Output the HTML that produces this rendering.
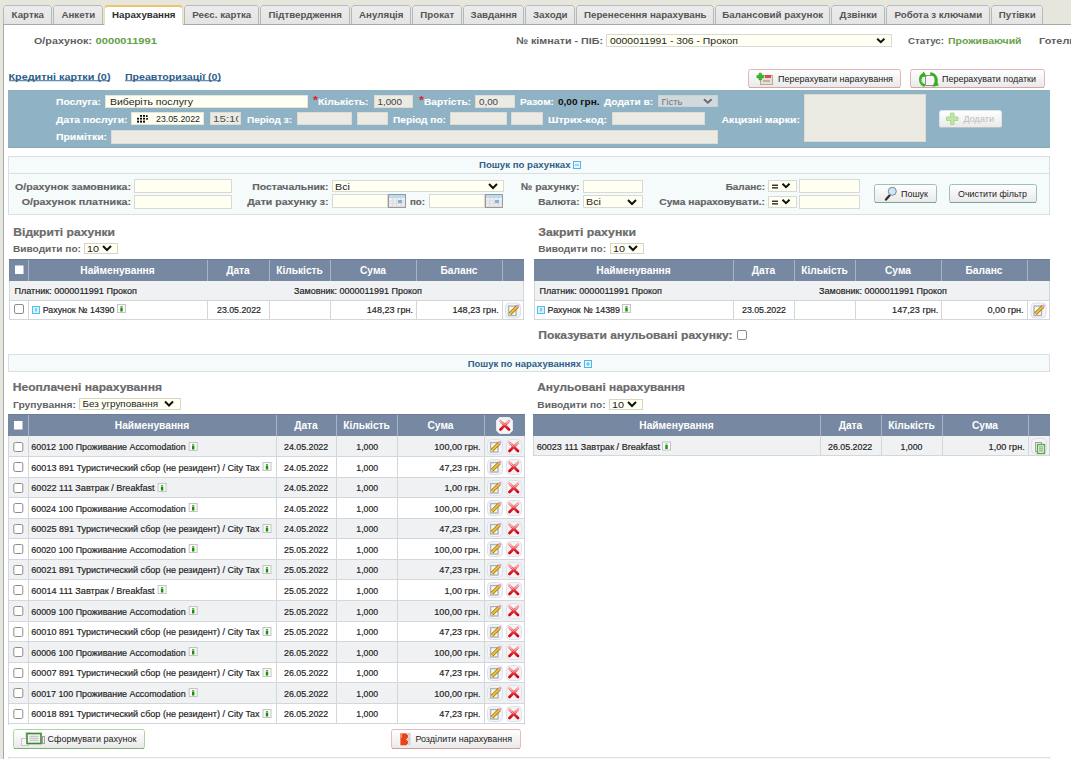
<!DOCTYPE html>
<html><head><meta charset="utf-8"><title>Нарахування</title>
<style>
html,body{margin:0;padding:0;background:#e6e6dc;overflow:hidden;width:1071px;height:759px}
svg{display:block;font-family:"Liberation Sans",sans-serif}
</style></head><body>
<svg width="1071" height="759" viewBox="0 0 1071 759">
<defs>
<linearGradient id="btn" x1="0" y1="0" x2="0" y2="1"><stop offset="0" stop-color="#ffffff"/><stop offset="1" stop-color="#e9e9e9"/></linearGradient>
<linearGradient id="tabg" x1="0" y1="0" x2="0" y2="1"><stop offset="0" stop-color="#ececec"/><stop offset="1" stop-color="#e4e4e4"/></linearGradient>
<linearGradient id="xg" x1="0" y1="0" x2="0" y2="1"><stop offset="0" stop-color="#f3a3a8"/><stop offset="0.45" stop-color="#e9434c"/><stop offset="1" stop-color="#d8000c"/></linearGradient>
</defs>
<rect x="0" y="0" width="1071" height="759" fill="#e6e6dc" />
<rect x="3" y="24" width="1068" height="735" fill="#ffffff" />
<rect x="3" y="24" width="1" height="735" fill="#a3aaab" />
<rect x="3" y="24" width="1068" height="1" fill="#a3aaab" />
<path d="M3.5,24 V7.5 L5.5,5.5 H49.5 L51.5,7.5 V24" fill="url(#tabg)" stroke="#b3baba" stroke-width="1"/>
<text x="11.64" y="18.30" font-size="9.4" fill="#555555" font-weight="bold" textLength="32.32" lengthAdjust="spacingAndGlyphs">Картка</text>
<path d="M53.5,24 V7.5 L55.5,5.5 H100.5 L102.5,7.5 V24" fill="url(#tabg)" stroke="#b3baba" stroke-width="1"/>
<text x="61.40" y="18.30" font-size="9.4" fill="#555555" font-weight="bold" textLength="33.80" lengthAdjust="spacingAndGlyphs">Анкети</text>
<path d="M104.5,25 V8 Q104.5,5.5 107,5.5 H180 Q182.5,5.5 182.5,8 V25" fill="#ffffff" stroke="#eadfb8" stroke-width="1"/>
<path d="M105.5,7.5 Q106,6 108,6 H179 Q181,6 181.5,7.5" fill="none" stroke="#ecc36e" stroke-width="2"/>
<rect x="105" y="24" width="78" height="2" fill="#ffffff" />
<text x="112.09" y="18.30" font-size="9.4" fill="#2e2e2e" font-weight="bold" textLength="63.42" lengthAdjust="spacingAndGlyphs">Нарахування</text>
<path d="M184.5,24 V7.5 L186.5,5.5 H256.5 L258.5,7.5 V24" fill="url(#tabg)" stroke="#b3baba" stroke-width="1"/>
<text x="192.31" y="18.30" font-size="9.4" fill="#555555" font-weight="bold" textLength="58.98" lengthAdjust="spacingAndGlyphs">Реєс. картка</text>
<path d="M260.5,24 V7.5 L262.5,5.5 H347.5 L349.5,7.5 V24" fill="url(#tabg)" stroke="#b3baba" stroke-width="1"/>
<text x="268.61" y="18.30" font-size="9.4" fill="#555555" font-weight="bold" textLength="73.39" lengthAdjust="spacingAndGlyphs">Підтвердження</text>
<path d="M351.5,24 V7.5 L353.5,5.5 H408.5 L410.5,7.5 V24" fill="url(#tabg)" stroke="#b3baba" stroke-width="1"/>
<text x="359.10" y="18.30" font-size="9.4" fill="#555555" font-weight="bold" textLength="44.40" lengthAdjust="spacingAndGlyphs">Ануляція</text>
<path d="M412.5,24 V7.5 L414.5,5.5 H459.5 L461.5,7.5 V24" fill="url(#tabg)" stroke="#b3baba" stroke-width="1"/>
<text x="420.34" y="18.30" font-size="9.4" fill="#555555" font-weight="bold" textLength="33.92" lengthAdjust="spacingAndGlyphs">Прокат</text>
<path d="M463.5,24 V7.5 L465.5,5.5 H521.5 L523.5,7.5 V24" fill="url(#tabg)" stroke="#b3baba" stroke-width="1"/>
<text x="470.55" y="18.30" font-size="9.4" fill="#555555" font-weight="bold" textLength="46.50" lengthAdjust="spacingAndGlyphs">Завдання</text>
<path d="M525.5,24 V7.5 L527.5,5.5 H572.5 L574.5,7.5 V24" fill="url(#tabg)" stroke="#b3baba" stroke-width="1"/>
<text x="532.98" y="18.30" font-size="9.4" fill="#555555" font-weight="bold" textLength="34.64" lengthAdjust="spacingAndGlyphs">Заходи</text>
<path d="M576.5,24 V7.5 L578.5,5.5 H711.5 L713.5,7.5 V24" fill="url(#tabg)" stroke="#b3baba" stroke-width="1"/>
<text x="584.02" y="18.30" font-size="9.4" fill="#555555" font-weight="bold" textLength="122.57" lengthAdjust="spacingAndGlyphs">Перенесення нарахувань</text>
<path d="M715.5,24 V7.5 L717.5,5.5 H827.5 L829.5,7.5 V24" fill="url(#tabg)" stroke="#b3baba" stroke-width="1"/>
<text x="722.38" y="18.30" font-size="9.4" fill="#555555" font-weight="bold" textLength="100.85" lengthAdjust="spacingAndGlyphs">Балансовий рахунок</text>
<path d="M831.5,24 V7.5 L833.5,5.5 H882.5 L884.5,7.5 V24" fill="url(#tabg)" stroke="#b3baba" stroke-width="1"/>
<text x="839.59" y="18.30" font-size="9.4" fill="#555555" font-weight="bold" textLength="37.42" lengthAdjust="spacingAndGlyphs">Дзвінки</text>
<path d="M886.5,24 V7.5 L888.5,5.5 H987.5 L989.5,7.5 V24" fill="url(#tabg)" stroke="#b3baba" stroke-width="1"/>
<text x="894.47" y="18.30" font-size="9.4" fill="#555555" font-weight="bold" textLength="87.66" lengthAdjust="spacingAndGlyphs">Робота з ключами</text>
<path d="M991.5,24 V7.5 L993.5,5.5 H1040.5 L1042.5,7.5 V24" fill="url(#tabg)" stroke="#b3baba" stroke-width="1"/>
<text x="998.89" y="18.30" font-size="9.4" fill="#555555" font-weight="bold" textLength="36.82" lengthAdjust="spacingAndGlyphs">Путівки</text>
<text x="34.00" y="44.30" font-size="9.5" fill="#5e5e5e" font-weight="bold" textLength="58.00" lengthAdjust="spacingAndGlyphs">О/рахунок:</text>
<text x="95.50" y="44.30" font-size="9.5" fill="#66a04a" font-weight="bold" textLength="61.50" lengthAdjust="spacingAndGlyphs">0000011991</text>
<text x="516.00" y="43.50" font-size="9.5" fill="#5e5e5e" font-weight="bold" textLength="87.00" lengthAdjust="spacingAndGlyphs">№ кімнати - ПІБ:</text>
<rect x="606" y="34" width="286" height="13" fill="#d9d9d3" />
<rect x="607" y="35" width="284" height="11" fill="#fffff2" />
<text x="610.00" y="44.00" font-size="8.9" fill="#1e1e1e" textLength="128.00" lengthAdjust="spacingAndGlyphs">0000011991 - 306 - Прокоп</text>
<path d="M877.2,38.8 L880.8,42.2 L884.4,38.8" fill="none" stroke="#111" stroke-width="2"/>
<text x="908.00" y="44.30" font-size="9.5" fill="#5e5e5e" font-weight="bold" textLength="36.00" lengthAdjust="spacingAndGlyphs">Статус:</text>
<text x="948.00" y="44.30" font-size="9.5" fill="#66a04a" font-weight="bold" textLength="73.50" lengthAdjust="spacingAndGlyphs">Проживаючий</text>
<text x="1039.00" y="44.30" font-size="9.5" fill="#5e5e5e" font-weight="bold" textLength="37.00" lengthAdjust="spacingAndGlyphs">Готель</text>
<text x="8.50" y="80.00" font-size="9.3" fill="#2b5e8c" font-weight="bold" textLength="102.00" lengthAdjust="spacingAndGlyphs">Кредитні картки (0)</text>
<rect x="9" y="80.3" width="101" height="0.9" fill="#2b5e8c" />
<text x="125.00" y="80.00" font-size="9.3" fill="#2b5e8c" font-weight="bold" textLength="96.00" lengthAdjust="spacingAndGlyphs">Преавторизації (0)</text>
<rect x="125" y="80.3" width="96" height="0.9" fill="#2b5e8c" />
<rect x="748.5" y="69.5" width="152" height="18" rx="2" fill="url(#btn)" stroke="#e3b5b5" stroke-width="1"/>
<rect x="749" y="87" width="151" height="1" fill="#d4a7a7" />
<rect x="760.5" y="75.5" width="12" height="9" fill="#e8e0d4" stroke="#b8ab98" stroke-width="1"/>
<rect x="765" y="75" width="6" height="3" fill="#e0484a" />
<rect x="763" y="80" width="7" height="2" fill="#c0b4a2" />
<path d="M759,73.2 h2.6 v2.1 h2.1 v2.6 h-2.1 v2.1 h-2.6 v-2.1 h-2.1 v-2.6 h2.1 z" fill="#3cb82a" stroke="#2a9a1a" stroke-width="0.5"/>
<text x="778.00" y="81.80" font-size="8.2" fill="#1a1a1a" textLength="115.00" lengthAdjust="spacingAndGlyphs">Перерахувати нарахування</text>
<rect x="910.5" y="69.5" width="134" height="18" rx="2" fill="url(#btn)" stroke="#e3b5b5" stroke-width="1"/>
<rect x="911" y="87" width="133" height="1" fill="#d4a7a7" />
<path d="M925.5,75.5 h8 l1.5,1.5 v8.5 h-9.5 z" fill="#f7f7f7" stroke="#8c8c8c" stroke-width="1"/>
<path d="M924.5,74.2 C919.2,75.5 918.8,83.2 924.8,85.6" fill="none" stroke="#35b022" stroke-width="2.8"/>
<path d="M919.6,77.6 L923.6,71.6 L926.6,76.6 z" fill="#35b022"/>
<path d="M930.2,73.6 C936.6,74.2 938.2,81.6 934.2,85.2" fill="none" stroke="#35b022" stroke-width="2.8"/>
<path d="M932.2,86.8 L938.8,85.6 L936.4,80.4 z" fill="#35b022"/>
<path d="M921.2,79 C921,81 921.8,83 923.4,84" fill="none" stroke="#9be38a" stroke-width="0.9"/>
<text x="942.00" y="81.80" font-size="8.2" fill="#1a1a1a" textLength="94.00" lengthAdjust="spacingAndGlyphs">Перерахувати податки</text>
<rect x="8" y="90" width="1042" height="58" fill="#90b2c5" />
<rect x="8" y="147" width="1042" height="1" fill="#89a7b8" />
<text x="56.00" y="105.00" font-size="9.3" fill="#ffffff" font-weight="bold" stroke="#ffffff" stroke-width="0.1" textLength="45.00" lengthAdjust="spacingAndGlyphs">Послуга:</text>
<rect x="105" y="95" width="203" height="13" fill="#e6e6d6" />
<rect x="106" y="96" width="201" height="11" fill="#fffff2" />
<text x="110.00" y="104.90" font-size="8.9" fill="#1e1e1e" textLength="83.00" lengthAdjust="spacingAndGlyphs">Виберіть послугу</text>
<text x="313.00" y="104.00" font-size="11" fill="#d9262b" font-weight="bold" textLength="5.00" lengthAdjust="spacingAndGlyphs">*</text>
<text x="318.00" y="105.00" font-size="9.3" fill="#ffffff" font-weight="bold" stroke="#ffffff" stroke-width="0.1" textLength="50.50" lengthAdjust="spacingAndGlyphs">Кількість:</text>
<rect x="374" y="95" width="39" height="13" fill="#dcdcd4" />
<rect x="375" y="96" width="37" height="11" fill="#ebebe4" />
<text x="377.50" y="105.00" font-size="8.9" fill="#444444" textLength="24.50" lengthAdjust="spacingAndGlyphs">1,000</text>
<text x="419.00" y="104.00" font-size="11" fill="#d9262b" font-weight="bold" textLength="5.00" lengthAdjust="spacingAndGlyphs">*</text>
<text x="424.00" y="105.00" font-size="9.3" fill="#ffffff" font-weight="bold" stroke="#ffffff" stroke-width="0.1" textLength="47.00" lengthAdjust="spacingAndGlyphs">Вартість:</text>
<rect x="475" y="95" width="40" height="13" fill="#dcdcd4" />
<rect x="476" y="96" width="38" height="11" fill="#ebebe4" />
<text x="479.00" y="105.00" font-size="8.9" fill="#444444" textLength="19.00" lengthAdjust="spacingAndGlyphs">0,00</text>
<text x="520.00" y="105.00" font-size="9.3" fill="#ffffff" font-weight="bold" stroke="#ffffff" stroke-width="0.1" textLength="34.00" lengthAdjust="spacingAndGlyphs">Разом:</text>
<text x="558.00" y="105.00" font-size="9.3" fill="#111111" font-weight="bold" textLength="41.50" lengthAdjust="spacingAndGlyphs">0,00 грн.</text>
<text x="604.00" y="105.00" font-size="9.3" fill="#ffffff" font-weight="bold" stroke="#ffffff" stroke-width="0.1" textLength="49.00" lengthAdjust="spacingAndGlyphs">Додати в:</text>
<rect x="658" y="95" width="60" height="12" fill="#c8d3d7" />
<rect x="659" y="96" width="58" height="10" fill="#d0dadd" />
<text x="661.50" y="104.80" font-size="8.9" fill="#6f7375" textLength="21.00" lengthAdjust="spacingAndGlyphs">Гість</text>
<path d="M704,99.3 L707.8,102.8 L711.6,99.3" fill="none" stroke="#676b6d" stroke-width="1.9"/>
<text x="56.00" y="122.90" font-size="9.3" fill="#ffffff" font-weight="bold" stroke="#ffffff" stroke-width="0.1" textLength="71.50" lengthAdjust="spacingAndGlyphs">Дата послуги:</text>
<rect x="131" y="112" width="73" height="13" fill="#e6e6d6" />
<rect x="132" y="113" width="71" height="11" fill="#fffff2" />
<rect x="140" y="115" width="2" height="1.8" fill="#0a0a0a" />
<rect x="143" y="115" width="2" height="1.8" fill="#0a0a0a" />
<rect x="146" y="115.2" width="1.6" height="1.8" fill="#0a0a0a" />
<rect x="137" y="117.8" width="2" height="1.8" fill="#0a0a0a" />
<rect x="140" y="117.8" width="2" height="1.8" fill="#0a0a0a" />
<rect x="143" y="117.8" width="2" height="1.8" fill="#0a0a0a" />
<rect x="146.2" y="118" width="1.6" height="1.8" fill="#0a0a0a" />
<rect x="137" y="120.8" width="2" height="1.8" fill="#0a0a0a" />
<rect x="140" y="120.8" width="2" height="1.8" fill="#0a0a0a" />
<rect x="143" y="120.8" width="2" height="1.8" fill="#0a0a0a" />
<rect x="137.2" y="119.6" width="1.6" height="1.2" fill="#8a8a86" />
<rect x="140.2" y="119.6" width="1.6" height="1.2" fill="#8a8a86" />
<rect x="143.2" y="119.6" width="1.6" height="1.2" fill="#8a8a86" />
<text x="156.00" y="122.30" font-size="8.9" fill="#1e1e1e" textLength="44.00" lengthAdjust="spacingAndGlyphs">23.05.2022</text>
<rect x="210" y="112" width="31" height="13" fill="#dcdcd4" />
<rect x="211" y="113" width="29" height="11" fill="#ebebe4" />
<clipPath id="ctime"><rect x="211" y="113" width="27.5" height="11"/></clipPath><g clip-path="url(#ctime)"><text x="213.00" y="122.30" font-size="8.9" fill="#505050" textLength="29.00" lengthAdjust="spacingAndGlyphs">15:10</text></g>
<text x="247.00" y="122.90" font-size="9.3" fill="#ffffff" font-weight="bold" stroke="#ffffff" stroke-width="0.1" textLength="45.00" lengthAdjust="spacingAndGlyphs">Період з:</text>
<rect x="297" y="112" width="55" height="13" fill="#dcdcd4" />
<rect x="298" y="113" width="53" height="11" fill="#ebebe4" />
<rect x="357" y="112" width="31" height="13" fill="#dcdcd4" />
<rect x="358" y="113" width="29" height="11" fill="#ebebe4" />
<text x="393.00" y="122.90" font-size="9.3" fill="#ffffff" font-weight="bold" stroke="#ffffff" stroke-width="0.1" textLength="53.00" lengthAdjust="spacingAndGlyphs">Період по:</text>
<rect x="450" y="112" width="57" height="13" fill="#dcdcd4" />
<rect x="451" y="113" width="55" height="11" fill="#ebebe4" />
<rect x="511" y="112" width="32" height="13" fill="#dcdcd4" />
<rect x="512" y="113" width="30" height="11" fill="#ebebe4" />
<text x="548.00" y="122.90" font-size="9.3" fill="#ffffff" font-weight="bold" stroke="#ffffff" stroke-width="0.1" textLength="59.00" lengthAdjust="spacingAndGlyphs">Штрих-код:</text>
<rect x="612" y="112" width="93" height="13" fill="#dcdcd4" />
<rect x="613" y="113" width="91" height="11" fill="#ebebe4" />
<text x="721.50" y="123.00" font-size="9.3" fill="#ffffff" font-weight="bold" stroke="#ffffff" stroke-width="0.1" textLength="78.50" lengthAdjust="spacingAndGlyphs">Акцизні марки:</text>
<rect x="804" y="94" width="122" height="48" fill="#dcdcd4" />
<rect x="805" y="95" width="120" height="46" fill="#ebebe4" />
<text x="56.00" y="140.30" font-size="9.3" fill="#ffffff" font-weight="bold" stroke="#ffffff" stroke-width="0.1" textLength="51.00" lengthAdjust="spacingAndGlyphs">Примітки:</text>
<rect x="111" y="130" width="607" height="14" fill="#dcdcd4" />
<rect x="112" y="131" width="605" height="12" fill="#ebebe4" />
<rect x="939.5" y="110.5" width="62" height="17" rx="2" fill="url(#btn)" stroke="#d8e4ea" stroke-width="1"/>
<rect x="940" y="127" width="61" height="1" fill="#b8c4c8" />
<path d="M950.5,113 h3.5 v4 h4 v3.5 h-4 v4 h-3.5 v-4 h-4 v-3.5 h4 z" fill="#bfe6a8" stroke="#9ed384" stroke-width="0.8"/>
<text x="963.50" y="122.40" font-size="8.2" fill="#bcbcbc" textLength="30.50" lengthAdjust="spacingAndGlyphs">Додати</text>
<rect x="8" y="156" width="1042" height="59" fill="#dcdfe2" />
<rect x="9" y="157" width="1040" height="57" fill="#f5fafa" />
<rect x="9" y="173" width="1040" height="1" fill="#dcdfe2" />
<text x="479.00" y="168.10" font-size="8.6" fill="#2f5f8a" font-weight="bold" textLength="91.50" lengthAdjust="spacingAndGlyphs">Пошук по рахунках</text>
<rect x="573.5" y="161.5" width="7" height="7" fill="#e6f6fd" stroke="#4fb5ea" stroke-width="1"/>
<rect x="575" y="164.5" width="4" height="1" fill="#4fb5ea" />
<text x="15.00" y="189.50" font-size="9.7" fill="#636363" font-weight="bold" stroke="#636363" stroke-width="0.15" textLength="116.00" lengthAdjust="spacingAndGlyphs">О/рахунок замовника:</text>
<rect x="134" y="179" width="98" height="14" fill="#d9d9d3" />
<rect x="135" y="180" width="96" height="12" fill="#fffff2" />
<text x="21.70" y="205.30" font-size="9.7" fill="#636363" font-weight="bold" stroke="#636363" stroke-width="0.15" textLength="109.30" lengthAdjust="spacingAndGlyphs">О/рахунок платника:</text>
<rect x="134" y="195" width="98" height="14" fill="#d9d9d3" />
<rect x="135" y="196" width="96" height="12" fill="#fffff2" />
<text x="252.30" y="189.50" font-size="9.7" fill="#636363" font-weight="bold" stroke="#636363" stroke-width="0.15" textLength="76.20" lengthAdjust="spacingAndGlyphs">Постачальник:</text>
<rect x="332" y="180" width="172" height="12" fill="#d9d9d3" />
<rect x="333" y="181" width="170" height="10" fill="#fffff2" />
<text x="335.00" y="189.50" font-size="8.9" fill="#1e1e1e" textLength="15.00" lengthAdjust="spacingAndGlyphs">Всі</text>
<path d="M489,184 L493,188 L497,184" fill="none" stroke="#111" stroke-width="2"/>
<text x="247.30" y="205.30" font-size="9.7" fill="#636363" font-weight="bold" stroke="#636363" stroke-width="0.15" textLength="81.20" lengthAdjust="spacingAndGlyphs">Дати рахунку з:</text>
<rect x="332" y="194" width="56" height="14" fill="#d9d9d3" />
<rect x="333" y="195" width="54" height="12" fill="#fffff2" />
<rect x="388.5" y="194.5" width="17" height="13" fill="#f0f0f0" stroke="#9a9a9a" stroke-width="1"/>
<rect x="389" y="195" width="16" height="3" fill="#b9dcf3" />
<rect x="389" y="200.6" width="16" height="1" fill="#dadada" />
<rect x="389" y="203.2" width="16" height="1" fill="#dadada" />
<rect x="389" y="205.8" width="16" height="1" fill="#dadada" />
<rect x="392.2" y="198" width="1" height="9" fill="#dadada" />
<rect x="396.4" y="198" width="1" height="9" fill="#dadada" />
<rect x="400.6" y="198" width="1" height="9" fill="#dadada" />
<rect x="398" y="200" width="4" height="3" fill="#7fb2e0" />
<text x="410.00" y="205.30" font-size="9.7" fill="#636363" font-weight="bold" stroke="#636363" stroke-width="0.15" textLength="15.00" lengthAdjust="spacingAndGlyphs">по:</text>
<rect x="429" y="194" width="56" height="14" fill="#d9d9d3" />
<rect x="430" y="195" width="54" height="12" fill="#fffff2" />
<rect x="485.5" y="194.5" width="17" height="13" fill="#f0f0f0" stroke="#9a9a9a" stroke-width="1"/>
<rect x="486" y="195" width="16" height="3" fill="#b9dcf3" />
<rect x="486" y="200.6" width="16" height="1" fill="#dadada" />
<rect x="486" y="203.2" width="16" height="1" fill="#dadada" />
<rect x="486" y="205.8" width="16" height="1" fill="#dadada" />
<rect x="489.2" y="198" width="1" height="9" fill="#dadada" />
<rect x="493.4" y="198" width="1" height="9" fill="#dadada" />
<rect x="497.6" y="198" width="1" height="9" fill="#dadada" />
<rect x="495" y="200" width="4" height="3" fill="#7fb2e0" />
<text x="520.70" y="189.50" font-size="9.7" fill="#636363" font-weight="bold" stroke="#636363" stroke-width="0.15" textLength="58.80" lengthAdjust="spacingAndGlyphs">№ рахунку:</text>
<rect x="583" y="180" width="60" height="13" fill="#d9d9d3" />
<rect x="584" y="181" width="58" height="11" fill="#fffff2" />
<text x="538.30" y="205.30" font-size="9.7" fill="#636363" font-weight="bold" stroke="#636363" stroke-width="0.15" textLength="41.20" lengthAdjust="spacingAndGlyphs">Валюта:</text>
<rect x="583" y="195" width="60" height="13" fill="#d9d9d3" />
<rect x="584" y="196" width="58" height="11" fill="#fffff2" />
<text x="586.00" y="205.00" font-size="8.9" fill="#1e1e1e" textLength="15.00" lengthAdjust="spacingAndGlyphs">Всі</text>
<path d="M628,200 L632,204 L636,200" fill="none" stroke="#111" stroke-width="2"/>
<text x="725.70" y="189.50" font-size="9.7" fill="#636363" font-weight="bold" stroke="#636363" stroke-width="0.15" textLength="39.30" lengthAdjust="spacingAndGlyphs">Баланс:</text>
<text x="659.30" y="205.30" font-size="9.7" fill="#636363" font-weight="bold" stroke="#636363" stroke-width="0.15" textLength="105.70" lengthAdjust="spacingAndGlyphs">Сума нараховувати.:</text>
<rect x="768" y="180" width="29" height="12" fill="#d9d9d3" />
<rect x="769" y="181" width="27" height="10" fill="#fffff2" />
<rect x="772" y="184.6" width="6" height="1.3" fill="#1a1a1a" />
<rect x="772" y="187.2" width="6" height="1.3" fill="#1a1a1a" />
<path d="M782.5,183.8 L786,187.2 L789.5,183.8" fill="none" stroke="#111" stroke-width="2"/>
<rect x="799" y="179" width="61" height="14" fill="#d9d9d3" />
<rect x="800" y="180" width="59" height="12" fill="#fffff2" />
<rect x="768" y="196" width="29" height="12" fill="#d9d9d3" />
<rect x="769" y="197" width="27" height="10" fill="#fffff2" />
<rect x="772" y="200.6" width="6" height="1.3" fill="#1a1a1a" />
<rect x="772" y="203.2" width="6" height="1.3" fill="#1a1a1a" />
<path d="M782.5,199.8 L786,203.2 L789.5,199.8" fill="none" stroke="#111" stroke-width="2"/>
<rect x="799" y="195" width="61" height="14" fill="#d9d9d3" />
<rect x="800" y="196" width="59" height="12" fill="#fffff2" />
<rect x="874.5" y="184.5" width="62" height="18" rx="2" fill="url(#btn)" stroke="#9fbfbb" stroke-width="1"/>
<rect x="875" y="202" width="61" height="1" fill="#7ea39e" />
<line x1="886" y1="199.5" x2="889.5" y2="195.5" stroke="#333" stroke-width="2.4" stroke-linecap="round"/>
<circle cx="892.3" cy="191.3" r="4" fill="#cfe6f7" stroke="#7a8a96" stroke-width="1"/>
<text x="901.00" y="197.00" font-size="8.2" fill="#1a1a1a" textLength="27.00" lengthAdjust="spacingAndGlyphs">Пошук</text>
<rect x="949.5" y="184.5" width="87" height="18" rx="2" fill="url(#btn)" stroke="#9fbfbb" stroke-width="1"/>
<rect x="950" y="202" width="86" height="1" fill="#7ea39e" />
<text x="958.00" y="197.00" font-size="8.2" fill="#1a1a1a" textLength="69.00" lengthAdjust="spacingAndGlyphs">Очистити фільтр</text>
<text x="13.30" y="235.80" font-size="11.2" fill="#6a6a6a" font-weight="bold" stroke="#6a6a6a" stroke-width="0.2" textLength="101.70" lengthAdjust="spacingAndGlyphs">Відкриті рахунки</text>
<text x="13.00" y="251.70" font-size="9.5" fill="#636363" font-weight="bold" textLength="68.00" lengthAdjust="spacingAndGlyphs">Виводити по:</text>
<rect x="84" y="243" width="34" height="11" fill="#d6d6c6" />
<rect x="85" y="244" width="32" height="9" fill="#fffff2" />
<text x="87.00" y="252.00" font-size="8.4" fill="#1e1e1e" textLength="12.00" lengthAdjust="spacingAndGlyphs">10</text>
<path d="M103,246 L107,250 L111,246" fill="none" stroke="#111" stroke-width="2"/>
<rect x="9" y="259" width="515" height="22" fill="#7788a2" />
<rect x="28" y="259" width="1" height="22" fill="#a9b4c4" />
<rect x="207" y="259" width="1" height="22" fill="#a9b4c4" />
<rect x="269" y="259" width="1" height="22" fill="#a9b4c4" />
<rect x="330" y="259" width="1" height="22" fill="#a9b4c4" />
<rect x="416" y="259" width="1" height="22" fill="#a9b4c4" />
<rect x="502" y="259" width="1" height="22" fill="#a9b4c4" />
<rect x="9" y="259" width="515" height="1" fill="#6d7d96" />
<text x="80.28" y="274.20" font-size="10.2" fill="#ffffff" font-weight="bold" textLength="74.44" lengthAdjust="spacingAndGlyphs">Найменування</text>
<text x="226.20" y="274.20" font-size="10.2" fill="#ffffff" font-weight="bold" textLength="23.61" lengthAdjust="spacingAndGlyphs">Дата</text>
<text x="276.16" y="274.20" font-size="10.2" fill="#ffffff" font-weight="bold" textLength="46.68" lengthAdjust="spacingAndGlyphs">Кількість</text>
<text x="360.01" y="274.20" font-size="10.2" fill="#ffffff" font-weight="bold" textLength="25.99" lengthAdjust="spacingAndGlyphs">Сума</text>
<text x="440.51" y="274.20" font-size="10.2" fill="#ffffff" font-weight="bold" textLength="36.99" lengthAdjust="spacingAndGlyphs">Баланс</text>
<rect x="15" y="265.5" width="8.5" height="8.5" fill="#ffffff" />
<rect x="9" y="281" width="515" height="19" fill="#eff1f3" />
<rect x="9" y="281" width="1" height="39" fill="#d3d6da" />
<rect x="523" y="281" width="1" height="39" fill="#d3d6da" />
<rect x="9" y="300" width="515" height="1" fill="#d3d6da" />
<text x="14.40" y="294.30" font-size="8.9" fill="#1e1e1e" stroke="#1e1e1e" stroke-width="0.18" textLength="122.60" lengthAdjust="spacingAndGlyphs">Платник: 0000011991 Прокоп</text>
<text x="294.00" y="294.30" font-size="8.9" fill="#1e1e1e" stroke="#1e1e1e" stroke-width="0.18" textLength="128.00" lengthAdjust="spacingAndGlyphs">Замовник: 0000011991 Прокоп</text>
<rect x="28" y="300" width="1" height="20" fill="#d3d6da" />
<rect x="207" y="300" width="1" height="20" fill="#d3d6da" />
<rect x="269" y="300" width="1" height="20" fill="#d3d6da" />
<rect x="330" y="300" width="1" height="20" fill="#d3d6da" />
<rect x="416" y="300" width="1" height="20" fill="#d3d6da" />
<rect x="502" y="300" width="1" height="20" fill="#d3d6da" />
<rect x="9" y="319" width="515" height="1" fill="#d3d6da" />
<rect x="14.5" y="304.5" width="9" height="9" rx="1.5" fill="#ffffff" stroke="#8d8d8d" stroke-width="1"/>
<rect x="32.5" y="306.5" width="7" height="7" fill="#d4f4fc" stroke="#55bdee" stroke-width="1"/>
<rect x="35.3" y="308" width="1.4" height="3.5" fill="#6cb8e0" />
<text x="42.80" y="312.60" font-size="8.9" fill="#1e1e1e" stroke="#1e1e1e" stroke-width="0.18" textLength="71.70" lengthAdjust="spacingAndGlyphs">Рахунок № 14390</text>
<rect x="117.5" y="304.5" width="8" height="8" fill="#fafafa" stroke="#c4c4c4" stroke-width="1"/>
<rect x="120.5" y="306" width="2" height="1" fill="#4caf2e" />
<rect x="120.3" y="307.5" width="2.4" height="4" fill="#1a8f0c" />
<text x="217.00" y="312.60" font-size="8.9" fill="#1e1e1e" stroke="#1e1e1e" stroke-width="0.18" textLength="44.00" lengthAdjust="spacingAndGlyphs">23.05.2022</text>
<text x="366.82" y="312.60" font-size="8.9" fill="#1e1e1e" stroke="#1e1e1e" stroke-width="0.18" textLength="46.18" lengthAdjust="spacingAndGlyphs">148,23 грн.</text>
<text x="452.52" y="312.60" font-size="8.9" fill="#1e1e1e" stroke="#1e1e1e" stroke-width="0.18" textLength="46.18" lengthAdjust="spacingAndGlyphs">148,23 грн.</text>
<rect x="505.5" y="303.0" width="15" height="15" rx="4" fill="#f3f4f6" stroke="#dde1ea" stroke-width="1"/>
<rect x="508.6" y="306.1" width="7.4" height="9.4" fill="#f9f9f9" stroke="#b2b2b2" stroke-width="1.4"/>
<path d="M510,313.7 L517.6,306.3" stroke="#8a6a12" stroke-width="3.4"/>
<path d="M510,313.7 L517.6,306.3" stroke="#f0c030" stroke-width="2.2"/>
<circle cx="518" cy="305.9" r="1.3" fill="#e49ae8"/>
<text x="538.30" y="235.80" font-size="11.2" fill="#6a6a6a" font-weight="bold" stroke="#6a6a6a" stroke-width="0.2" textLength="97.70" lengthAdjust="spacingAndGlyphs">Закриті рахунки</text>
<text x="538.30" y="251.70" font-size="9.5" fill="#636363" font-weight="bold" textLength="67.70" lengthAdjust="spacingAndGlyphs">Виводити по:</text>
<rect x="610" y="243" width="34" height="11" fill="#d6d6c6" />
<rect x="611" y="244" width="32" height="9" fill="#fffff2" />
<text x="613.00" y="252.00" font-size="8.4" fill="#1e1e1e" textLength="12.00" lengthAdjust="spacingAndGlyphs">10</text>
<path d="M629,246 L633,250 L637,246" fill="none" stroke="#111" stroke-width="2"/>
<rect x="534" y="259" width="516" height="22" fill="#7788a2" />
<rect x="733" y="259" width="1" height="22" fill="#a9b4c4" />
<rect x="794" y="259" width="1" height="22" fill="#a9b4c4" />
<rect x="855" y="259" width="1" height="22" fill="#a9b4c4" />
<rect x="941" y="259" width="1" height="22" fill="#a9b4c4" />
<rect x="1027" y="259" width="1" height="22" fill="#a9b4c4" />
<rect x="534" y="259" width="516" height="1" fill="#6d7d96" />
<text x="596.28" y="274.20" font-size="10.2" fill="#ffffff" font-weight="bold" textLength="74.44" lengthAdjust="spacingAndGlyphs">Найменування</text>
<text x="751.70" y="274.20" font-size="10.2" fill="#ffffff" font-weight="bold" textLength="23.61" lengthAdjust="spacingAndGlyphs">Дата</text>
<text x="801.16" y="274.20" font-size="10.2" fill="#ffffff" font-weight="bold" textLength="46.68" lengthAdjust="spacingAndGlyphs">Кількість</text>
<text x="885.01" y="274.20" font-size="10.2" fill="#ffffff" font-weight="bold" textLength="25.99" lengthAdjust="spacingAndGlyphs">Сума</text>
<text x="965.51" y="274.20" font-size="10.2" fill="#ffffff" font-weight="bold" textLength="36.99" lengthAdjust="spacingAndGlyphs">Баланс</text>
<rect x="534" y="281" width="516" height="19" fill="#eff1f3" />
<rect x="534" y="281" width="1" height="39" fill="#d3d6da" />
<rect x="1049" y="281" width="1" height="39" fill="#d3d6da" />
<rect x="534" y="300" width="516" height="1" fill="#d3d6da" />
<text x="539.50" y="294.30" font-size="8.9" fill="#1e1e1e" stroke="#1e1e1e" stroke-width="0.18" textLength="122.50" lengthAdjust="spacingAndGlyphs">Платник: 0000011991 Прокоп</text>
<text x="819.00" y="294.30" font-size="8.9" fill="#1e1e1e" stroke="#1e1e1e" stroke-width="0.18" textLength="128.00" lengthAdjust="spacingAndGlyphs">Замовник: 0000011991 Прокоп</text>
<rect x="733" y="300" width="1" height="20" fill="#d3d6da" />
<rect x="794" y="300" width="1" height="20" fill="#d3d6da" />
<rect x="855" y="300" width="1" height="20" fill="#d3d6da" />
<rect x="941" y="300" width="1" height="20" fill="#d3d6da" />
<rect x="1027" y="300" width="1" height="20" fill="#d3d6da" />
<rect x="534" y="319" width="516" height="1" fill="#d3d6da" />
<rect x="537.5" y="306.5" width="7" height="7" fill="#d4f4fc" stroke="#55bdee" stroke-width="1"/>
<rect x="540.3" y="308" width="1.4" height="3.5" fill="#6cb8e0" />
<text x="547.50" y="312.60" font-size="8.9" fill="#1e1e1e" stroke="#1e1e1e" stroke-width="0.18" textLength="72.50" lengthAdjust="spacingAndGlyphs">Рахунок № 14389</text>
<rect x="622.5" y="304.5" width="8" height="8" fill="#fafafa" stroke="#c4c4c4" stroke-width="1"/>
<rect x="625.5" y="306" width="2" height="1" fill="#4caf2e" />
<rect x="625.3" y="307.5" width="2.4" height="4" fill="#1a8f0c" />
<text x="742.00" y="312.60" font-size="8.9" fill="#1e1e1e" stroke="#1e1e1e" stroke-width="0.18" textLength="44.00" lengthAdjust="spacingAndGlyphs">23.05.2022</text>
<text x="892.12" y="312.60" font-size="8.9" fill="#1e1e1e" stroke="#1e1e1e" stroke-width="0.18" textLength="46.18" lengthAdjust="spacingAndGlyphs">147,23 грн.</text>
<text x="987.52" y="312.60" font-size="8.9" fill="#1e1e1e" stroke="#1e1e1e" stroke-width="0.18" textLength="36.08" lengthAdjust="spacingAndGlyphs">0,00 грн.</text>
<rect x="1031.0" y="303.0" width="15" height="15" rx="4" fill="#f3f4f6" stroke="#dde1ea" stroke-width="1"/>
<rect x="1034.1" y="306.1" width="7.4" height="9.4" fill="#f9f9f9" stroke="#b2b2b2" stroke-width="1.4"/>
<path d="M1035.5,313.7 L1043.1,306.3" stroke="#8a6a12" stroke-width="3.4"/>
<path d="M1035.5,313.7 L1043.1,306.3" stroke="#f0c030" stroke-width="2.2"/>
<circle cx="1043.5" cy="305.9" r="1.3" fill="#e49ae8"/>
<text x="538.30" y="338.50" font-size="11.2" fill="#6a6a6a" font-weight="bold" stroke="#6a6a6a" stroke-width="0.2" textLength="194.20" lengthAdjust="spacingAndGlyphs">Показувати анульовані рахунку:</text>
<rect x="737.5" y="330.5" width="9" height="9" rx="1.5" fill="#ffffff" stroke="#8d8d8d" stroke-width="1"/>
<rect x="8" y="354" width="1042" height="18" fill="#dcdfe2" />
<rect x="9" y="355" width="1040" height="16" fill="#f5fafa" />
<text x="467.70" y="367.10" font-size="8.6" fill="#2f5f8a" font-weight="bold" textLength="113.30" lengthAdjust="spacingAndGlyphs">Пошук по нарахуваннях</text>
<rect x="584.5" y="360.5" width="7" height="7" fill="#e6f6fd" stroke="#4fb5ea" stroke-width="1"/>
<rect x="586" y="363.5" width="4" height="1" fill="#4fb5ea" />
<rect x="587.5" y="362" width="1" height="4" fill="#4fb5ea" />
<text x="12.70" y="390.80" font-size="11.2" fill="#6a6a6a" font-weight="bold" stroke="#6a6a6a" stroke-width="0.2" textLength="149.30" lengthAdjust="spacingAndGlyphs">Неоплачені нарахування</text>
<text x="13.00" y="407.50" font-size="9.5" fill="#636363" font-weight="bold" textLength="63.00" lengthAdjust="spacingAndGlyphs">Групування:</text>
<rect x="79" y="398" width="102" height="12" fill="#d6d6c6" />
<rect x="80" y="399" width="100" height="10" fill="#fffff2" />
<text x="82.50" y="407.30" font-size="8.9" fill="#1e1e1e" textLength="75.50" lengthAdjust="spacingAndGlyphs">Без угруповання</text>
<path d="M165,401.5 L169,405.5 L173,401.5" fill="none" stroke="#111" stroke-width="2"/>
<rect x="8" y="414" width="517" height="22" fill="#7788a2" />
<rect x="28" y="414" width="1" height="22" fill="#a9b4c4" />
<rect x="276" y="414" width="1" height="22" fill="#a9b4c4" />
<rect x="336" y="414" width="1" height="22" fill="#a9b4c4" />
<rect x="397" y="414" width="1" height="22" fill="#a9b4c4" />
<rect x="484" y="414" width="1" height="22" fill="#a9b4c4" />
<rect x="8" y="414" width="517" height="1" fill="#6d7d96" />
<text x="114.78" y="429.20" font-size="10.2" fill="#ffffff" font-weight="bold" textLength="74.44" lengthAdjust="spacingAndGlyphs">Найменування</text>
<text x="294.20" y="429.20" font-size="10.2" fill="#ffffff" font-weight="bold" textLength="23.61" lengthAdjust="spacingAndGlyphs">Дата</text>
<text x="343.16" y="429.20" font-size="10.2" fill="#ffffff" font-weight="bold" textLength="46.68" lengthAdjust="spacingAndGlyphs">Кількість</text>
<text x="427.51" y="429.20" font-size="10.2" fill="#ffffff" font-weight="bold" textLength="25.99" lengthAdjust="spacingAndGlyphs">Сума</text>
<rect x="14" y="421" width="8.5" height="8.5" fill="#ffffff" />
<path d="M499.5,417.5 h10 l3,3 v10 l-3,3 h-10 l-3,-3 v-10 z" fill="#f4f5f8" stroke="#e6e8ee" stroke-width="1"/>
<path d="M500.5,421 L509.0,429.5 M509.0,421 L500.5,429.5" stroke="url(#xg)" stroke-width="2.6" stroke-linecap="round"/>
<path d="M500.9,421.4 L504.07,424.57 M508.6,421.4 L505.43,424.57" stroke="#fde4e6" stroke-width="0.8" stroke-linecap="round" opacity="0.8"/>
<rect x="8" y="436" width="517" height="21" fill="#eff1f3" />
<rect x="8" y="457" width="517" height="21" fill="#ffffff" />
<rect x="8" y="478" width="517" height="20" fill="#eff1f3" />
<rect x="8" y="498" width="517" height="21" fill="#ffffff" />
<rect x="8" y="519" width="517" height="20" fill="#eff1f3" />
<rect x="8" y="539" width="517" height="21" fill="#ffffff" />
<rect x="8" y="560" width="517" height="20" fill="#eff1f3" />
<rect x="8" y="580" width="517" height="21" fill="#ffffff" />
<rect x="8" y="601" width="517" height="21" fill="#eff1f3" />
<rect x="8" y="622" width="517" height="20" fill="#ffffff" />
<rect x="8" y="642" width="517" height="21" fill="#eff1f3" />
<rect x="8" y="663" width="517" height="20" fill="#ffffff" />
<rect x="8" y="683" width="517" height="21" fill="#eff1f3" />
<rect x="8" y="704" width="517" height="20" fill="#ffffff" />
<rect x="8" y="456" width="517" height="1" fill="#d3d6da" />
<rect x="8" y="477" width="517" height="1" fill="#d3d6da" />
<rect x="8" y="497" width="517" height="1" fill="#d3d6da" />
<rect x="8" y="518" width="517" height="1" fill="#d3d6da" />
<rect x="8" y="538" width="517" height="1" fill="#d3d6da" />
<rect x="8" y="559" width="517" height="1" fill="#d3d6da" />
<rect x="8" y="579" width="517" height="1" fill="#d3d6da" />
<rect x="8" y="600" width="517" height="1" fill="#d3d6da" />
<rect x="8" y="621" width="517" height="1" fill="#d3d6da" />
<rect x="8" y="641" width="517" height="1" fill="#d3d6da" />
<rect x="8" y="662" width="517" height="1" fill="#d3d6da" />
<rect x="8" y="682" width="517" height="1" fill="#d3d6da" />
<rect x="8" y="703" width="517" height="1" fill="#d3d6da" />
<rect x="8" y="723" width="517" height="1" fill="#d3d6da" />
<rect x="28" y="436" width="1" height="288" fill="#d3d6da" />
<rect x="276" y="436" width="1" height="288" fill="#d3d6da" />
<rect x="336" y="436" width="1" height="288" fill="#d3d6da" />
<rect x="397" y="436" width="1" height="288" fill="#d3d6da" />
<rect x="484" y="436" width="1" height="288" fill="#d3d6da" />
<rect x="13.8" y="442.5" width="9" height="9" rx="1.5" fill="#ffffff" stroke="#8d8d8d" stroke-width="1"/>
<text x="31.30" y="450.10" font-size="8.9" fill="#1e1e1e" stroke="#1e1e1e" stroke-width="0.18" textLength="154.40" lengthAdjust="spacingAndGlyphs">60012 100 Проживание Accomodation</text>
<rect x="189.2" y="442.5" width="8" height="8" fill="#fafafa" stroke="#c4c4c4" stroke-width="1"/>
<rect x="192.2" y="444" width="2" height="1" fill="#4caf2e" />
<rect x="192.0" y="445.5" width="2.4" height="4" fill="#1a8f0c" />
<text x="284.00" y="450.10" font-size="8.9" fill="#1e1e1e" stroke="#1e1e1e" stroke-width="0.18" textLength="44.20" lengthAdjust="spacingAndGlyphs">24.05.2022</text>
<text x="356.29" y="450.10" font-size="8.9" fill="#1e1e1e" stroke="#1e1e1e" stroke-width="0.18" textLength="21.82" lengthAdjust="spacingAndGlyphs">1,000</text>
<text x="434.32" y="450.10" font-size="8.9" fill="#1e1e1e" stroke="#1e1e1e" stroke-width="0.18" textLength="46.18" lengthAdjust="spacingAndGlyphs">100,00 грн.</text>
<rect x="487.5" y="439.5" width="15" height="15" rx="4" fill="#f3f4f6" stroke="#dde1ea" stroke-width="1"/>
<rect x="490.6" y="442.6" width="7.4" height="9.4" fill="#f9f9f9" stroke="#b2b2b2" stroke-width="1.4"/>
<path d="M492,450.2 L499.6,442.8" stroke="#8a6a12" stroke-width="3.4"/>
<path d="M492,450.2 L499.6,442.8" stroke="#f0c030" stroke-width="2.2"/>
<circle cx="500" cy="442.4" r="1.3" fill="#e49ae8"/>
<rect x="506.5" y="439.5" width="15" height="15" rx="4" fill="#f3f4f6" stroke="#dde1ea" stroke-width="1"/>
<path d="M509.5,442.5 L518.0,451.0 M518.0,442.5 L509.5,451.0" stroke="url(#xg)" stroke-width="2.6" stroke-linecap="round"/>
<path d="M509.9,442.9 L513.07,446.07 M517.6,442.9 L514.43,446.07" stroke="#fde4e6" stroke-width="0.8" stroke-linecap="round" opacity="0.8"/>
<rect x="13.8" y="462.5" width="9" height="9" rx="1.5" fill="#ffffff" stroke="#8d8d8d" stroke-width="1"/>
<text x="31.30" y="470.66" font-size="8.9" fill="#1e1e1e" stroke="#1e1e1e" stroke-width="0.18" textLength="228.20" lengthAdjust="spacingAndGlyphs">60013 891 Туристический сбор (не резидент) / City Tax</text>
<rect x="263.0" y="462.5" width="8" height="8" fill="#fafafa" stroke="#c4c4c4" stroke-width="1"/>
<rect x="266.0" y="464" width="2" height="1" fill="#4caf2e" />
<rect x="265.8" y="465.5" width="2.4" height="4" fill="#1a8f0c" />
<text x="284.00" y="470.66" font-size="8.9" fill="#1e1e1e" stroke="#1e1e1e" stroke-width="0.18" textLength="44.20" lengthAdjust="spacingAndGlyphs">24.05.2022</text>
<text x="356.29" y="470.66" font-size="8.9" fill="#1e1e1e" stroke="#1e1e1e" stroke-width="0.18" textLength="21.82" lengthAdjust="spacingAndGlyphs">1,000</text>
<text x="439.37" y="470.66" font-size="8.9" fill="#1e1e1e" stroke="#1e1e1e" stroke-width="0.18" textLength="41.13" lengthAdjust="spacingAndGlyphs">47,23 грн.</text>
<rect x="487.5" y="459.5" width="15" height="15" rx="4" fill="#f3f4f6" stroke="#dde1ea" stroke-width="1"/>
<rect x="490.6" y="462.6" width="7.4" height="9.4" fill="#f9f9f9" stroke="#b2b2b2" stroke-width="1.4"/>
<path d="M492,470.2 L499.6,462.8" stroke="#8a6a12" stroke-width="3.4"/>
<path d="M492,470.2 L499.6,462.8" stroke="#f0c030" stroke-width="2.2"/>
<circle cx="500" cy="462.4" r="1.3" fill="#e49ae8"/>
<rect x="506.5" y="459.5" width="15" height="15" rx="4" fill="#f3f4f6" stroke="#dde1ea" stroke-width="1"/>
<path d="M509.5,462.5 L518.0,471.0 M518.0,462.5 L509.5,471.0" stroke="url(#xg)" stroke-width="2.6" stroke-linecap="round"/>
<path d="M509.9,462.9 L513.07,466.07 M517.6,462.9 L514.43,466.07" stroke="#fde4e6" stroke-width="0.8" stroke-linecap="round" opacity="0.8"/>
<rect x="13.8" y="483.5" width="9" height="9" rx="1.5" fill="#ffffff" stroke="#8d8d8d" stroke-width="1"/>
<text x="31.30" y="491.22" font-size="8.9" fill="#1e1e1e" stroke="#1e1e1e" stroke-width="0.18" textLength="123.30" lengthAdjust="spacingAndGlyphs">60022 111 Завтрак / Breakfast</text>
<rect x="158.1" y="483.5" width="8" height="8" fill="#fafafa" stroke="#c4c4c4" stroke-width="1"/>
<rect x="161.1" y="485" width="2" height="1" fill="#4caf2e" />
<rect x="160.9" y="486.5" width="2.4" height="4" fill="#1a8f0c" />
<text x="284.00" y="491.22" font-size="8.9" fill="#1e1e1e" stroke="#1e1e1e" stroke-width="0.18" textLength="44.20" lengthAdjust="spacingAndGlyphs">24.05.2022</text>
<text x="356.29" y="491.22" font-size="8.9" fill="#1e1e1e" stroke="#1e1e1e" stroke-width="0.18" textLength="21.82" lengthAdjust="spacingAndGlyphs">1,000</text>
<text x="444.42" y="491.22" font-size="8.9" fill="#1e1e1e" stroke="#1e1e1e" stroke-width="0.18" textLength="36.08" lengthAdjust="spacingAndGlyphs">1,00 грн.</text>
<rect x="487.5" y="480.5" width="15" height="15" rx="4" fill="#f3f4f6" stroke="#dde1ea" stroke-width="1"/>
<rect x="490.6" y="483.6" width="7.4" height="9.4" fill="#f9f9f9" stroke="#b2b2b2" stroke-width="1.4"/>
<path d="M492,491.2 L499.6,483.8" stroke="#8a6a12" stroke-width="3.4"/>
<path d="M492,491.2 L499.6,483.8" stroke="#f0c030" stroke-width="2.2"/>
<circle cx="500" cy="483.4" r="1.3" fill="#e49ae8"/>
<rect x="506.5" y="480.5" width="15" height="15" rx="4" fill="#f3f4f6" stroke="#dde1ea" stroke-width="1"/>
<path d="M509.5,483.5 L518.0,492.0 M518.0,483.5 L509.5,492.0" stroke="url(#xg)" stroke-width="2.6" stroke-linecap="round"/>
<path d="M509.9,483.9 L513.07,487.07 M517.6,483.9 L514.43,487.07" stroke="#fde4e6" stroke-width="0.8" stroke-linecap="round" opacity="0.8"/>
<rect x="13.8" y="503.5" width="9" height="9" rx="1.5" fill="#ffffff" stroke="#8d8d8d" stroke-width="1"/>
<text x="31.30" y="511.78" font-size="8.9" fill="#1e1e1e" stroke="#1e1e1e" stroke-width="0.18" textLength="154.40" lengthAdjust="spacingAndGlyphs">60024 100 Проживание Accomodation</text>
<rect x="189.2" y="503.5" width="8" height="8" fill="#fafafa" stroke="#c4c4c4" stroke-width="1"/>
<rect x="192.2" y="505" width="2" height="1" fill="#4caf2e" />
<rect x="192.0" y="506.5" width="2.4" height="4" fill="#1a8f0c" />
<text x="284.00" y="511.78" font-size="8.9" fill="#1e1e1e" stroke="#1e1e1e" stroke-width="0.18" textLength="44.20" lengthAdjust="spacingAndGlyphs">24.05.2022</text>
<text x="356.29" y="511.78" font-size="8.9" fill="#1e1e1e" stroke="#1e1e1e" stroke-width="0.18" textLength="21.82" lengthAdjust="spacingAndGlyphs">1,000</text>
<text x="434.32" y="511.78" font-size="8.9" fill="#1e1e1e" stroke="#1e1e1e" stroke-width="0.18" textLength="46.18" lengthAdjust="spacingAndGlyphs">100,00 грн.</text>
<rect x="487.5" y="500.5" width="15" height="15" rx="4" fill="#f3f4f6" stroke="#dde1ea" stroke-width="1"/>
<rect x="490.6" y="503.6" width="7.4" height="9.4" fill="#f9f9f9" stroke="#b2b2b2" stroke-width="1.4"/>
<path d="M492,511.2 L499.6,503.8" stroke="#8a6a12" stroke-width="3.4"/>
<path d="M492,511.2 L499.6,503.8" stroke="#f0c030" stroke-width="2.2"/>
<circle cx="500" cy="503.4" r="1.3" fill="#e49ae8"/>
<rect x="506.5" y="500.5" width="15" height="15" rx="4" fill="#f3f4f6" stroke="#dde1ea" stroke-width="1"/>
<path d="M509.5,503.5 L518.0,512.0 M518.0,503.5 L509.5,512.0" stroke="url(#xg)" stroke-width="2.6" stroke-linecap="round"/>
<path d="M509.9,503.9 L513.07,507.07 M517.6,503.9 L514.43,507.07" stroke="#fde4e6" stroke-width="0.8" stroke-linecap="round" opacity="0.8"/>
<rect x="13.8" y="524.5" width="9" height="9" rx="1.5" fill="#ffffff" stroke="#8d8d8d" stroke-width="1"/>
<text x="31.30" y="532.34" font-size="8.9" fill="#1e1e1e" stroke="#1e1e1e" stroke-width="0.18" textLength="228.20" lengthAdjust="spacingAndGlyphs">60025 891 Туристический сбор (не резидент) / City Tax</text>
<rect x="263.0" y="524.5" width="8" height="8" fill="#fafafa" stroke="#c4c4c4" stroke-width="1"/>
<rect x="266.0" y="526" width="2" height="1" fill="#4caf2e" />
<rect x="265.8" y="527.5" width="2.4" height="4" fill="#1a8f0c" />
<text x="284.00" y="532.34" font-size="8.9" fill="#1e1e1e" stroke="#1e1e1e" stroke-width="0.18" textLength="44.20" lengthAdjust="spacingAndGlyphs">24.05.2022</text>
<text x="356.29" y="532.34" font-size="8.9" fill="#1e1e1e" stroke="#1e1e1e" stroke-width="0.18" textLength="21.82" lengthAdjust="spacingAndGlyphs">1,000</text>
<text x="439.37" y="532.34" font-size="8.9" fill="#1e1e1e" stroke="#1e1e1e" stroke-width="0.18" textLength="41.13" lengthAdjust="spacingAndGlyphs">47,23 грн.</text>
<rect x="487.5" y="521.5" width="15" height="15" rx="4" fill="#f3f4f6" stroke="#dde1ea" stroke-width="1"/>
<rect x="490.6" y="524.6" width="7.4" height="9.4" fill="#f9f9f9" stroke="#b2b2b2" stroke-width="1.4"/>
<path d="M492,532.2 L499.6,524.8" stroke="#8a6a12" stroke-width="3.4"/>
<path d="M492,532.2 L499.6,524.8" stroke="#f0c030" stroke-width="2.2"/>
<circle cx="500" cy="524.4" r="1.3" fill="#e49ae8"/>
<rect x="506.5" y="521.5" width="15" height="15" rx="4" fill="#f3f4f6" stroke="#dde1ea" stroke-width="1"/>
<path d="M509.5,524.5 L518.0,533.0 M518.0,524.5 L509.5,533.0" stroke="url(#xg)" stroke-width="2.6" stroke-linecap="round"/>
<path d="M509.9,524.9 L513.07,528.07 M517.6,524.9 L514.43,528.07" stroke="#fde4e6" stroke-width="0.8" stroke-linecap="round" opacity="0.8"/>
<rect x="13.8" y="544.5" width="9" height="9" rx="1.5" fill="#ffffff" stroke="#8d8d8d" stroke-width="1"/>
<text x="31.30" y="552.90" font-size="8.9" fill="#1e1e1e" stroke="#1e1e1e" stroke-width="0.18" textLength="154.40" lengthAdjust="spacingAndGlyphs">60020 100 Проживание Accomodation</text>
<rect x="189.2" y="544.5" width="8" height="8" fill="#fafafa" stroke="#c4c4c4" stroke-width="1"/>
<rect x="192.2" y="546" width="2" height="1" fill="#4caf2e" />
<rect x="192.0" y="547.5" width="2.4" height="4" fill="#1a8f0c" />
<text x="284.00" y="552.90" font-size="8.9" fill="#1e1e1e" stroke="#1e1e1e" stroke-width="0.18" textLength="44.20" lengthAdjust="spacingAndGlyphs">25.05.2022</text>
<text x="356.29" y="552.90" font-size="8.9" fill="#1e1e1e" stroke="#1e1e1e" stroke-width="0.18" textLength="21.82" lengthAdjust="spacingAndGlyphs">1,000</text>
<text x="434.32" y="552.90" font-size="8.9" fill="#1e1e1e" stroke="#1e1e1e" stroke-width="0.18" textLength="46.18" lengthAdjust="spacingAndGlyphs">100,00 грн.</text>
<rect x="487.5" y="541.5" width="15" height="15" rx="4" fill="#f3f4f6" stroke="#dde1ea" stroke-width="1"/>
<rect x="490.6" y="544.6" width="7.4" height="9.4" fill="#f9f9f9" stroke="#b2b2b2" stroke-width="1.4"/>
<path d="M492,552.2 L499.6,544.8" stroke="#8a6a12" stroke-width="3.4"/>
<path d="M492,552.2 L499.6,544.8" stroke="#f0c030" stroke-width="2.2"/>
<circle cx="500" cy="544.4" r="1.3" fill="#e49ae8"/>
<rect x="506.5" y="541.5" width="15" height="15" rx="4" fill="#f3f4f6" stroke="#dde1ea" stroke-width="1"/>
<path d="M509.5,544.5 L518.0,553.0 M518.0,544.5 L509.5,553.0" stroke="url(#xg)" stroke-width="2.6" stroke-linecap="round"/>
<path d="M509.9,544.9 L513.07,548.07 M517.6,544.9 L514.43,548.07" stroke="#fde4e6" stroke-width="0.8" stroke-linecap="round" opacity="0.8"/>
<rect x="13.8" y="565.5" width="9" height="9" rx="1.5" fill="#ffffff" stroke="#8d8d8d" stroke-width="1"/>
<text x="31.30" y="573.46" font-size="8.9" fill="#1e1e1e" stroke="#1e1e1e" stroke-width="0.18" textLength="228.20" lengthAdjust="spacingAndGlyphs">60021 891 Туристический сбор (не резидент) / City Tax</text>
<rect x="263.0" y="565.5" width="8" height="8" fill="#fafafa" stroke="#c4c4c4" stroke-width="1"/>
<rect x="266.0" y="567" width="2" height="1" fill="#4caf2e" />
<rect x="265.8" y="568.5" width="2.4" height="4" fill="#1a8f0c" />
<text x="284.00" y="573.46" font-size="8.9" fill="#1e1e1e" stroke="#1e1e1e" stroke-width="0.18" textLength="44.20" lengthAdjust="spacingAndGlyphs">25.05.2022</text>
<text x="356.29" y="573.46" font-size="8.9" fill="#1e1e1e" stroke="#1e1e1e" stroke-width="0.18" textLength="21.82" lengthAdjust="spacingAndGlyphs">1,000</text>
<text x="439.37" y="573.46" font-size="8.9" fill="#1e1e1e" stroke="#1e1e1e" stroke-width="0.18" textLength="41.13" lengthAdjust="spacingAndGlyphs">47,23 грн.</text>
<rect x="487.5" y="562.5" width="15" height="15" rx="4" fill="#f3f4f6" stroke="#dde1ea" stroke-width="1"/>
<rect x="490.6" y="565.6" width="7.4" height="9.4" fill="#f9f9f9" stroke="#b2b2b2" stroke-width="1.4"/>
<path d="M492,573.2 L499.6,565.8" stroke="#8a6a12" stroke-width="3.4"/>
<path d="M492,573.2 L499.6,565.8" stroke="#f0c030" stroke-width="2.2"/>
<circle cx="500" cy="565.4" r="1.3" fill="#e49ae8"/>
<rect x="506.5" y="562.5" width="15" height="15" rx="4" fill="#f3f4f6" stroke="#dde1ea" stroke-width="1"/>
<path d="M509.5,565.5 L518.0,574.0 M518.0,565.5 L509.5,574.0" stroke="url(#xg)" stroke-width="2.6" stroke-linecap="round"/>
<path d="M509.9,565.9 L513.07,569.07 M517.6,565.9 L514.43,569.07" stroke="#fde4e6" stroke-width="0.8" stroke-linecap="round" opacity="0.8"/>
<rect x="13.8" y="585.5" width="9" height="9" rx="1.5" fill="#ffffff" stroke="#8d8d8d" stroke-width="1"/>
<text x="31.30" y="594.02" font-size="8.9" fill="#1e1e1e" stroke="#1e1e1e" stroke-width="0.18" textLength="123.30" lengthAdjust="spacingAndGlyphs">60014 111 Завтрак / Breakfast</text>
<rect x="158.1" y="585.5" width="8" height="8" fill="#fafafa" stroke="#c4c4c4" stroke-width="1"/>
<rect x="161.1" y="587" width="2" height="1" fill="#4caf2e" />
<rect x="160.9" y="588.5" width="2.4" height="4" fill="#1a8f0c" />
<text x="284.00" y="594.02" font-size="8.9" fill="#1e1e1e" stroke="#1e1e1e" stroke-width="0.18" textLength="44.20" lengthAdjust="spacingAndGlyphs">25.05.2022</text>
<text x="356.29" y="594.02" font-size="8.9" fill="#1e1e1e" stroke="#1e1e1e" stroke-width="0.18" textLength="21.82" lengthAdjust="spacingAndGlyphs">1,000</text>
<text x="444.42" y="594.02" font-size="8.9" fill="#1e1e1e" stroke="#1e1e1e" stroke-width="0.18" textLength="36.08" lengthAdjust="spacingAndGlyphs">1,00 грн.</text>
<rect x="487.5" y="582.5" width="15" height="15" rx="4" fill="#f3f4f6" stroke="#dde1ea" stroke-width="1"/>
<rect x="490.6" y="585.6" width="7.4" height="9.4" fill="#f9f9f9" stroke="#b2b2b2" stroke-width="1.4"/>
<path d="M492,593.2 L499.6,585.8" stroke="#8a6a12" stroke-width="3.4"/>
<path d="M492,593.2 L499.6,585.8" stroke="#f0c030" stroke-width="2.2"/>
<circle cx="500" cy="585.4" r="1.3" fill="#e49ae8"/>
<rect x="506.5" y="582.5" width="15" height="15" rx="4" fill="#f3f4f6" stroke="#dde1ea" stroke-width="1"/>
<path d="M509.5,585.5 L518.0,594.0 M518.0,585.5 L509.5,594.0" stroke="url(#xg)" stroke-width="2.6" stroke-linecap="round"/>
<path d="M509.9,585.9 L513.07,589.07 M517.6,585.9 L514.43,589.07" stroke="#fde4e6" stroke-width="0.8" stroke-linecap="round" opacity="0.8"/>
<rect x="13.8" y="606.5" width="9" height="9" rx="1.5" fill="#ffffff" stroke="#8d8d8d" stroke-width="1"/>
<text x="31.30" y="614.58" font-size="8.9" fill="#1e1e1e" stroke="#1e1e1e" stroke-width="0.18" textLength="154.40" lengthAdjust="spacingAndGlyphs">60009 100 Проживание Accomodation</text>
<rect x="189.2" y="606.5" width="8" height="8" fill="#fafafa" stroke="#c4c4c4" stroke-width="1"/>
<rect x="192.2" y="608" width="2" height="1" fill="#4caf2e" />
<rect x="192.0" y="609.5" width="2.4" height="4" fill="#1a8f0c" />
<text x="284.00" y="614.58" font-size="8.9" fill="#1e1e1e" stroke="#1e1e1e" stroke-width="0.18" textLength="44.20" lengthAdjust="spacingAndGlyphs">25.05.2022</text>
<text x="356.29" y="614.58" font-size="8.9" fill="#1e1e1e" stroke="#1e1e1e" stroke-width="0.18" textLength="21.82" lengthAdjust="spacingAndGlyphs">1,000</text>
<text x="434.32" y="614.58" font-size="8.9" fill="#1e1e1e" stroke="#1e1e1e" stroke-width="0.18" textLength="46.18" lengthAdjust="spacingAndGlyphs">100,00 грн.</text>
<rect x="487.5" y="603.5" width="15" height="15" rx="4" fill="#f3f4f6" stroke="#dde1ea" stroke-width="1"/>
<rect x="490.6" y="606.6" width="7.4" height="9.4" fill="#f9f9f9" stroke="#b2b2b2" stroke-width="1.4"/>
<path d="M492,614.2 L499.6,606.8" stroke="#8a6a12" stroke-width="3.4"/>
<path d="M492,614.2 L499.6,606.8" stroke="#f0c030" stroke-width="2.2"/>
<circle cx="500" cy="606.4" r="1.3" fill="#e49ae8"/>
<rect x="506.5" y="603.5" width="15" height="15" rx="4" fill="#f3f4f6" stroke="#dde1ea" stroke-width="1"/>
<path d="M509.5,606.5 L518.0,615.0 M518.0,606.5 L509.5,615.0" stroke="url(#xg)" stroke-width="2.6" stroke-linecap="round"/>
<path d="M509.9,606.9 L513.07,610.07 M517.6,606.9 L514.43,610.07" stroke="#fde4e6" stroke-width="0.8" stroke-linecap="round" opacity="0.8"/>
<rect x="13.8" y="627.5" width="9" height="9" rx="1.5" fill="#ffffff" stroke="#8d8d8d" stroke-width="1"/>
<text x="31.30" y="635.14" font-size="8.9" fill="#1e1e1e" stroke="#1e1e1e" stroke-width="0.18" textLength="228.20" lengthAdjust="spacingAndGlyphs">60010 891 Туристический сбор (не резидент) / City Tax</text>
<rect x="263.0" y="627.5" width="8" height="8" fill="#fafafa" stroke="#c4c4c4" stroke-width="1"/>
<rect x="266.0" y="629" width="2" height="1" fill="#4caf2e" />
<rect x="265.8" y="630.5" width="2.4" height="4" fill="#1a8f0c" />
<text x="284.00" y="635.14" font-size="8.9" fill="#1e1e1e" stroke="#1e1e1e" stroke-width="0.18" textLength="44.20" lengthAdjust="spacingAndGlyphs">25.05.2022</text>
<text x="356.29" y="635.14" font-size="8.9" fill="#1e1e1e" stroke="#1e1e1e" stroke-width="0.18" textLength="21.82" lengthAdjust="spacingAndGlyphs">1,000</text>
<text x="439.37" y="635.14" font-size="8.9" fill="#1e1e1e" stroke="#1e1e1e" stroke-width="0.18" textLength="41.13" lengthAdjust="spacingAndGlyphs">47,23 грн.</text>
<rect x="487.5" y="624.5" width="15" height="15" rx="4" fill="#f3f4f6" stroke="#dde1ea" stroke-width="1"/>
<rect x="490.6" y="627.6" width="7.4" height="9.4" fill="#f9f9f9" stroke="#b2b2b2" stroke-width="1.4"/>
<path d="M492,635.2 L499.6,627.8" stroke="#8a6a12" stroke-width="3.4"/>
<path d="M492,635.2 L499.6,627.8" stroke="#f0c030" stroke-width="2.2"/>
<circle cx="500" cy="627.4" r="1.3" fill="#e49ae8"/>
<rect x="506.5" y="624.5" width="15" height="15" rx="4" fill="#f3f4f6" stroke="#dde1ea" stroke-width="1"/>
<path d="M509.5,627.5 L518.0,636.0 M518.0,627.5 L509.5,636.0" stroke="url(#xg)" stroke-width="2.6" stroke-linecap="round"/>
<path d="M509.9,627.9 L513.07,631.07 M517.6,627.9 L514.43,631.07" stroke="#fde4e6" stroke-width="0.8" stroke-linecap="round" opacity="0.8"/>
<rect x="13.8" y="647.5" width="9" height="9" rx="1.5" fill="#ffffff" stroke="#8d8d8d" stroke-width="1"/>
<text x="31.30" y="655.70" font-size="8.9" fill="#1e1e1e" stroke="#1e1e1e" stroke-width="0.18" textLength="154.40" lengthAdjust="spacingAndGlyphs">60006 100 Проживание Accomodation</text>
<rect x="189.2" y="647.5" width="8" height="8" fill="#fafafa" stroke="#c4c4c4" stroke-width="1"/>
<rect x="192.2" y="649" width="2" height="1" fill="#4caf2e" />
<rect x="192.0" y="650.5" width="2.4" height="4" fill="#1a8f0c" />
<text x="284.00" y="655.70" font-size="8.9" fill="#1e1e1e" stroke="#1e1e1e" stroke-width="0.18" textLength="44.20" lengthAdjust="spacingAndGlyphs">26.05.2022</text>
<text x="356.29" y="655.70" font-size="8.9" fill="#1e1e1e" stroke="#1e1e1e" stroke-width="0.18" textLength="21.82" lengthAdjust="spacingAndGlyphs">1,000</text>
<text x="434.32" y="655.70" font-size="8.9" fill="#1e1e1e" stroke="#1e1e1e" stroke-width="0.18" textLength="46.18" lengthAdjust="spacingAndGlyphs">100,00 грн.</text>
<rect x="487.5" y="644.5" width="15" height="15" rx="4" fill="#f3f4f6" stroke="#dde1ea" stroke-width="1"/>
<rect x="490.6" y="647.6" width="7.4" height="9.4" fill="#f9f9f9" stroke="#b2b2b2" stroke-width="1.4"/>
<path d="M492,655.2 L499.6,647.8" stroke="#8a6a12" stroke-width="3.4"/>
<path d="M492,655.2 L499.6,647.8" stroke="#f0c030" stroke-width="2.2"/>
<circle cx="500" cy="647.4" r="1.3" fill="#e49ae8"/>
<rect x="506.5" y="644.5" width="15" height="15" rx="4" fill="#f3f4f6" stroke="#dde1ea" stroke-width="1"/>
<path d="M509.5,647.5 L518.0,656.0 M518.0,647.5 L509.5,656.0" stroke="url(#xg)" stroke-width="2.6" stroke-linecap="round"/>
<path d="M509.9,647.9 L513.07,651.07 M517.6,647.9 L514.43,651.07" stroke="#fde4e6" stroke-width="0.8" stroke-linecap="round" opacity="0.8"/>
<rect x="13.8" y="668.5" width="9" height="9" rx="1.5" fill="#ffffff" stroke="#8d8d8d" stroke-width="1"/>
<text x="31.30" y="676.26" font-size="8.9" fill="#1e1e1e" stroke="#1e1e1e" stroke-width="0.18" textLength="228.20" lengthAdjust="spacingAndGlyphs">60007 891 Туристический сбор (не резидент) / City Tax</text>
<rect x="263.0" y="668.5" width="8" height="8" fill="#fafafa" stroke="#c4c4c4" stroke-width="1"/>
<rect x="266.0" y="670" width="2" height="1" fill="#4caf2e" />
<rect x="265.8" y="671.5" width="2.4" height="4" fill="#1a8f0c" />
<text x="284.00" y="676.26" font-size="8.9" fill="#1e1e1e" stroke="#1e1e1e" stroke-width="0.18" textLength="44.20" lengthAdjust="spacingAndGlyphs">26.05.2022</text>
<text x="356.29" y="676.26" font-size="8.9" fill="#1e1e1e" stroke="#1e1e1e" stroke-width="0.18" textLength="21.82" lengthAdjust="spacingAndGlyphs">1,000</text>
<text x="439.37" y="676.26" font-size="8.9" fill="#1e1e1e" stroke="#1e1e1e" stroke-width="0.18" textLength="41.13" lengthAdjust="spacingAndGlyphs">47,23 грн.</text>
<rect x="487.5" y="665.5" width="15" height="15" rx="4" fill="#f3f4f6" stroke="#dde1ea" stroke-width="1"/>
<rect x="490.6" y="668.6" width="7.4" height="9.4" fill="#f9f9f9" stroke="#b2b2b2" stroke-width="1.4"/>
<path d="M492,676.2 L499.6,668.8" stroke="#8a6a12" stroke-width="3.4"/>
<path d="M492,676.2 L499.6,668.8" stroke="#f0c030" stroke-width="2.2"/>
<circle cx="500" cy="668.4" r="1.3" fill="#e49ae8"/>
<rect x="506.5" y="665.5" width="15" height="15" rx="4" fill="#f3f4f6" stroke="#dde1ea" stroke-width="1"/>
<path d="M509.5,668.5 L518.0,677.0 M518.0,668.5 L509.5,677.0" stroke="url(#xg)" stroke-width="2.6" stroke-linecap="round"/>
<path d="M509.9,668.9 L513.07,672.07 M517.6,668.9 L514.43,672.07" stroke="#fde4e6" stroke-width="0.8" stroke-linecap="round" opacity="0.8"/>
<rect x="13.8" y="688.5" width="9" height="9" rx="1.5" fill="#ffffff" stroke="#8d8d8d" stroke-width="1"/>
<text x="31.30" y="696.82" font-size="8.9" fill="#1e1e1e" stroke="#1e1e1e" stroke-width="0.18" textLength="154.40" lengthAdjust="spacingAndGlyphs">60017 100 Проживание Accomodation</text>
<rect x="189.2" y="688.5" width="8" height="8" fill="#fafafa" stroke="#c4c4c4" stroke-width="1"/>
<rect x="192.2" y="690" width="2" height="1" fill="#4caf2e" />
<rect x="192.0" y="691.5" width="2.4" height="4" fill="#1a8f0c" />
<text x="284.00" y="696.82" font-size="8.9" fill="#1e1e1e" stroke="#1e1e1e" stroke-width="0.18" textLength="44.20" lengthAdjust="spacingAndGlyphs">26.05.2022</text>
<text x="356.29" y="696.82" font-size="8.9" fill="#1e1e1e" stroke="#1e1e1e" stroke-width="0.18" textLength="21.82" lengthAdjust="spacingAndGlyphs">1,000</text>
<text x="434.32" y="696.82" font-size="8.9" fill="#1e1e1e" stroke="#1e1e1e" stroke-width="0.18" textLength="46.18" lengthAdjust="spacingAndGlyphs">100,00 грн.</text>
<rect x="487.5" y="685.5" width="15" height="15" rx="4" fill="#f3f4f6" stroke="#dde1ea" stroke-width="1"/>
<rect x="490.6" y="688.6" width="7.4" height="9.4" fill="#f9f9f9" stroke="#b2b2b2" stroke-width="1.4"/>
<path d="M492,696.2 L499.6,688.8" stroke="#8a6a12" stroke-width="3.4"/>
<path d="M492,696.2 L499.6,688.8" stroke="#f0c030" stroke-width="2.2"/>
<circle cx="500" cy="688.4" r="1.3" fill="#e49ae8"/>
<rect x="506.5" y="685.5" width="15" height="15" rx="4" fill="#f3f4f6" stroke="#dde1ea" stroke-width="1"/>
<path d="M509.5,688.5 L518.0,697.0 M518.0,688.5 L509.5,697.0" stroke="url(#xg)" stroke-width="2.6" stroke-linecap="round"/>
<path d="M509.9,688.9 L513.07,692.07 M517.6,688.9 L514.43,692.07" stroke="#fde4e6" stroke-width="0.8" stroke-linecap="round" opacity="0.8"/>
<rect x="13.8" y="709.5" width="9" height="9" rx="1.5" fill="#ffffff" stroke="#8d8d8d" stroke-width="1"/>
<text x="31.30" y="717.38" font-size="8.9" fill="#1e1e1e" stroke="#1e1e1e" stroke-width="0.18" textLength="228.20" lengthAdjust="spacingAndGlyphs">60018 891 Туристический сбор (не резидент) / City Tax</text>
<rect x="263.0" y="709.5" width="8" height="8" fill="#fafafa" stroke="#c4c4c4" stroke-width="1"/>
<rect x="266.0" y="711" width="2" height="1" fill="#4caf2e" />
<rect x="265.8" y="712.5" width="2.4" height="4" fill="#1a8f0c" />
<text x="284.00" y="717.38" font-size="8.9" fill="#1e1e1e" stroke="#1e1e1e" stroke-width="0.18" textLength="44.20" lengthAdjust="spacingAndGlyphs">26.05.2022</text>
<text x="356.29" y="717.38" font-size="8.9" fill="#1e1e1e" stroke="#1e1e1e" stroke-width="0.18" textLength="21.82" lengthAdjust="spacingAndGlyphs">1,000</text>
<text x="439.37" y="717.38" font-size="8.9" fill="#1e1e1e" stroke="#1e1e1e" stroke-width="0.18" textLength="41.13" lengthAdjust="spacingAndGlyphs">47,23 грн.</text>
<rect x="487.5" y="706.5" width="15" height="15" rx="4" fill="#f3f4f6" stroke="#dde1ea" stroke-width="1"/>
<rect x="490.6" y="709.6" width="7.4" height="9.4" fill="#f9f9f9" stroke="#b2b2b2" stroke-width="1.4"/>
<path d="M492,717.2 L499.6,709.8" stroke="#8a6a12" stroke-width="3.4"/>
<path d="M492,717.2 L499.6,709.8" stroke="#f0c030" stroke-width="2.2"/>
<circle cx="500" cy="709.4" r="1.3" fill="#e49ae8"/>
<rect x="506.5" y="706.5" width="15" height="15" rx="4" fill="#f3f4f6" stroke="#dde1ea" stroke-width="1"/>
<path d="M509.5,709.5 L518.0,718.0 M518.0,709.5 L509.5,718.0" stroke="url(#xg)" stroke-width="2.6" stroke-linecap="round"/>
<path d="M509.9,709.9 L513.07,713.07 M517.6,709.9 L514.43,713.07" stroke="#fde4e6" stroke-width="0.8" stroke-linecap="round" opacity="0.8"/>
<rect x="8" y="436" width="1" height="289" fill="#d3d6da" />
<rect x="524" y="436" width="1" height="289" fill="#d3d6da" />
<rect x="13.5" y="729.5" width="131" height="19" rx="2" fill="url(#btn)" stroke="#a9d89e" stroke-width="1"/>
<rect x="14" y="748" width="130" height="1" fill="#7fb07a" />
<rect x="21.5" y="738.5" width="7" height="7" fill="#f6f6f6" stroke="#c8c8c8" stroke-width="1"/>
<rect x="25.5" y="732.5" width="4" height="4" fill="none" stroke="#dddddd" stroke-width="1"/>
<rect x="27" y="733.5" width="14" height="10" fill="#f2f2f2" stroke="#3d8a35" stroke-width="1.6"/>
<rect x="29.5" y="735.8" width="9" height="1" fill="#bdbdbd" />
<rect x="29.5" y="737.8" width="9" height="1" fill="#bdbdbd" />
<rect x="29.5" y="739.8" width="9" height="1" fill="#bdbdbd" />
<rect x="42.5" y="736.5" width="2" height="7" fill="none" stroke="#a0a0a0" stroke-width="1"/>
<text x="47.60" y="742.00" font-size="8.5" fill="#1a1a1a" textLength="88.80" lengthAdjust="spacingAndGlyphs">Сформувати рахунок</text>
<rect x="391.5" y="729.5" width="129" height="19" rx="2" fill="url(#btn)" stroke="#e8b8b8" stroke-width="1"/>
<rect x="392" y="748" width="128" height="1" fill="#cf9f9f" />
<rect x="405.5" y="733" width="5.5" height="11.8" fill="#c9c9c9"/>
<rect x="409.5" y="733" width="1.5" height="11.8" fill="#e0e0e0" />
<path d="M400,733 h6.2 l2.2,2.4 v2.4 l-2,1.6 l2,1.6 v2.4 l-2.2,2.4 h-6.2 z" fill="#e8441a" stroke="#ffffff" stroke-width="0.7"/>
<rect x="400.6" y="733.8" width="1.4" height="4" fill="#f59a7a" />
<text x="415.40" y="742.00" font-size="8.5" fill="#1a1a1a" textLength="96.60" lengthAdjust="spacingAndGlyphs">Розділити нарахування</text>
<rect x="8" y="757" width="1042" height="2" fill="#dcdfe1" />
<rect x="9" y="758" width="1040" height="1" fill="#f5fafa" />
<text x="537.30" y="390.80" font-size="11.2" fill="#6a6a6a" font-weight="bold" stroke="#6a6a6a" stroke-width="0.2" textLength="147.70" lengthAdjust="spacingAndGlyphs">Анульовані нарахування</text>
<text x="537.30" y="407.50" font-size="9.5" fill="#636363" font-weight="bold" textLength="68.40" lengthAdjust="spacingAndGlyphs">Виводити по:</text>
<rect x="609" y="399" width="34" height="11" fill="#d6d6c6" />
<rect x="610" y="400" width="32" height="9" fill="#fffff2" />
<text x="612.00" y="408.00" font-size="8.4" fill="#1e1e1e" textLength="12.00" lengthAdjust="spacingAndGlyphs">10</text>
<path d="M628,402 L632,406 L636,402" fill="none" stroke="#111" stroke-width="2"/>
<rect x="533" y="414" width="517" height="22" fill="#7788a2" />
<rect x="820" y="414" width="1" height="22" fill="#a9b4c4" />
<rect x="881" y="414" width="1" height="22" fill="#a9b4c4" />
<rect x="942" y="414" width="1" height="22" fill="#a9b4c4" />
<rect x="1028" y="414" width="1" height="22" fill="#a9b4c4" />
<rect x="533" y="414" width="517" height="1" fill="#6d7d96" />
<text x="639.28" y="429.20" font-size="10.2" fill="#ffffff" font-weight="bold" textLength="74.44" lengthAdjust="spacingAndGlyphs">Найменування</text>
<text x="838.70" y="429.20" font-size="10.2" fill="#ffffff" font-weight="bold" textLength="23.61" lengthAdjust="spacingAndGlyphs">Дата</text>
<text x="888.16" y="429.20" font-size="10.2" fill="#ffffff" font-weight="bold" textLength="46.68" lengthAdjust="spacingAndGlyphs">Кількість</text>
<text x="972.01" y="429.20" font-size="10.2" fill="#ffffff" font-weight="bold" textLength="25.99" lengthAdjust="spacingAndGlyphs">Сума</text>
<rect x="533" y="436" width="517" height="20" fill="#eff1f3" />
<rect x="820" y="436" width="1" height="20" fill="#d3d6da" />
<rect x="881" y="436" width="1" height="20" fill="#d3d6da" />
<rect x="942" y="436" width="1" height="20" fill="#d3d6da" />
<rect x="1028" y="436" width="1" height="20" fill="#d3d6da" />
<rect x="533" y="436" width="1" height="20" fill="#d3d6da" />
<rect x="1049" y="436" width="1" height="20" fill="#d3d6da" />
<rect x="533" y="455" width="517" height="1" fill="#d3d6da" />
<text x="536.70" y="450.20" font-size="8.9" fill="#1e1e1e" stroke="#1e1e1e" stroke-width="0.18" textLength="123.30" lengthAdjust="spacingAndGlyphs">60023 111 Завтрак / Breakfast</text>
<rect x="662.5" y="442.0" width="8" height="8" fill="#fafafa" stroke="#c4c4c4" stroke-width="1"/>
<rect x="665.5" y="443.5" width="2" height="1" fill="#4caf2e" />
<rect x="665.3" y="445.0" width="2.4" height="4" fill="#1a8f0c" />
<text x="828.00" y="450.20" font-size="8.9" fill="#1e1e1e" stroke="#1e1e1e" stroke-width="0.18" textLength="44.30" lengthAdjust="spacingAndGlyphs">26.05.2022</text>
<text x="900.59" y="450.20" font-size="8.9" fill="#1e1e1e" stroke="#1e1e1e" stroke-width="0.18" textLength="21.82" lengthAdjust="spacingAndGlyphs">1,000</text>
<text x="988.62" y="450.20" font-size="8.9" fill="#1e1e1e" stroke="#1e1e1e" stroke-width="0.18" textLength="36.08" lengthAdjust="spacingAndGlyphs">1,00 грн.</text>
<rect x="1031.5" y="438.5" width="15" height="15" rx="4" fill="#f3f4f6" stroke="#dde1ea" stroke-width="1"/>
<rect x="1035.5" y="442.5" width="6" height="9" fill="#f4f4f4" stroke="#9aa89a" stroke-width="1"/>
<rect x="1037.5" y="444.5" width="7" height="9" fill="#eef8ea" stroke="#5caa48" stroke-width="1.4"/>
<rect x="1039" y="446.5" width="4" height="0.8" fill="#5a7a5a" />
<rect x="1039" y="448.5" width="4" height="0.8" fill="#5a7a5a" />
<rect x="1039" y="450.5" width="4" height="0.8" fill="#5a7a5a" />
</svg>
</body></html>
